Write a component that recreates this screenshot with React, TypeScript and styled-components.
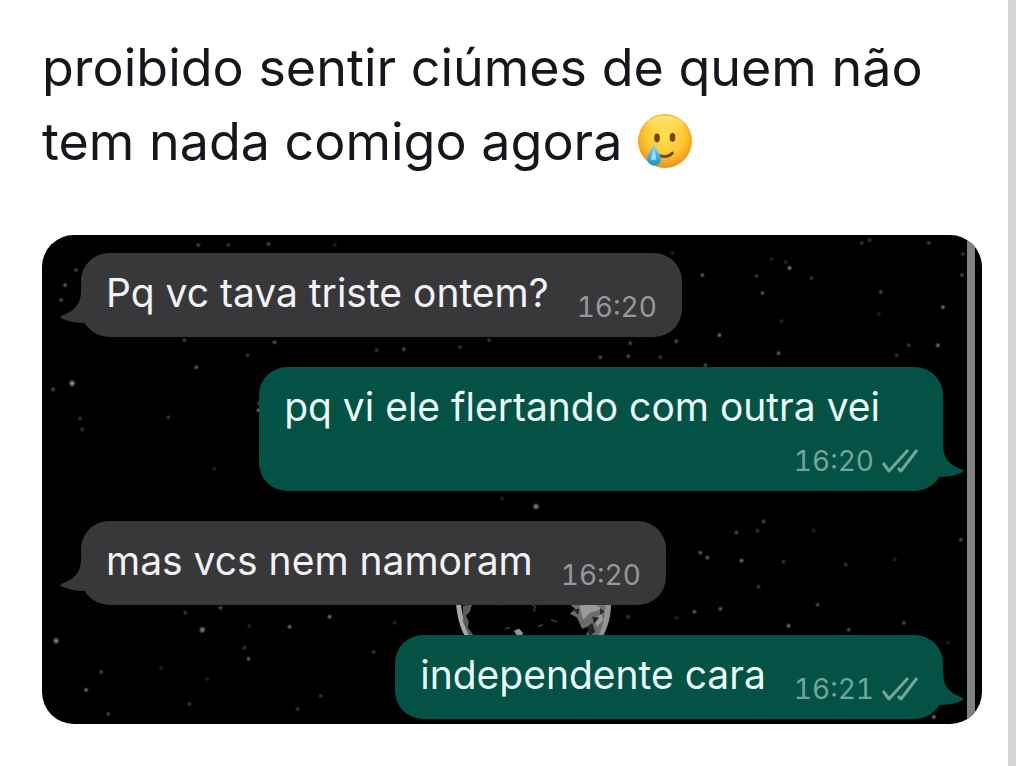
import React from "react";
import styled, { createGlobalStyle, css } from "styled-components";

const GlobalStyle = createGlobalStyle`
  *, *::before, *::after { box-sizing: border-box; }
  body {
    margin: 0;
    background: #fff;
    font-family: Inter, "Liberation Sans", sans-serif;
  }
`;

const Page = styled.div`
  display: flex;
  min-height: 100vh;
  padding-right: 8px;
  background: #fff;
`;

const Post = styled.article`
  flex: 1;
  min-width: 0;
  padding: 31px 26px 40px 42px;
`;

const Rail = styled.div`
  flex: none;
  width: 8px;
  background: #d6d6d6;
`;

const PostText = styled.p`
  margin: 0 0 56px;
  color: #14171c;
  font-size: 52px;
  font-weight: 400;
  line-height: 74px;
`;

const Emoji = styled.svg`
  width: 56px;
  height: 56px;
  vertical-align: -9px;
`;

const Chat = styled.section`
  position: relative;
  overflow: hidden;
  border-radius: 32px;
  background: #000;
`;

const Sky = styled.svg`
  position: absolute;
  inset: 0;
  width: 100%;
  height: 100%;
`;

const ScrollBar = styled.div`
  position: absolute;
  top: 0;
  bottom: 0;
  right: 7px;
  width: 8px;
  background: #808080;
`;

const Messages = styled.ul`
  position: relative;
  display: flex;
  flex-direction: column;
  gap: 30px;
  margin: 0;
  padding: 18px 39px 5px;
  list-style: none;
`;

const Words = styled.span`
  font-size: 39px;
  line-height: 48px;
`;

const Bubble = styled.li<{ $out?: boolean; $stacked?: boolean }>`
  position: relative;
  display: flex;
  justify-content: space-between;
  gap: 12px 28px;
  min-height: 84px;
  padding: 16px 25px 12px;
  border-radius: 28px;
  align-self: ${(p) => (p.$out ? "flex-end" : "flex-start")};
  background: ${(p) => (p.$out ? "#045146" : "#38373a")};
  color: ${(p) => (p.$out ? "#e9fbf6" : "#f3f2f6")};
  ${(p) =>
    p.$stacked &&
    css`
      flex-direction: column;
      ${Words} {
        padding-right: 38px;
      }
    `}
`;

const Meta = styled.span<{ $out?: boolean }>`
  display: flex;
  align-items: center;
  align-self: flex-end;
  gap: 8px;
  font-size: 28px;
  font-variant-numeric: tabular-nums;
  line-height: 36px;
  color: ${(p) => (p.$out ? "#74a49b" : "#98979b")};
`;

const TailShape = styled.svg<{ $out?: boolean }>`
  position: absolute;
  bottom: 2px;
  width: 42px;
  height: 44px;
  ${(p) =>
    p.$out
      ? css`right: -21px; fill: #045146;`
      : css`left: -21px; fill: #38373a; transform: scaleX(-1);`}
`;

const TickShape = styled.svg`
  width: 36px;
  height: 26px;
`;

function Tail({ out }: { out?: boolean }) {
  return (
    <TailShape $out={out} viewBox="0 0 42 44" aria-hidden="true">
      <path d="M21 0C21 13 27 20 41 25Q42 26 41 27Q32 32 16 32L6 38V0Z" />
    </TailShape>
  );
}

function Ticks() {
  return (
    <TickShape viewBox="0 0 36 26" role="img" aria-label="lida">
      <path
        d="M1 15L7 23L26 2M16 20L19 23L35 2"
        fill="none"
        stroke="#74a49b"
        strokeWidth="3"
        strokeLinejoin="round"
      />
    </TickShape>
  );
}

function TearFace() {
  return (
    <Emoji viewBox="0 0 56 56" role="img" aria-label="rosto sorridente com lágrima">
      <defs>
        <radialGradient id="face" cx="50%" cy="40%" r="62%">
          <stop offset="0" stopColor="#ffe154" />
          <stop offset="0.6" stopColor="#fcc62f" />
          <stop offset="0.9" stopColor="#ee9a20" />
          <stop offset="1" stopColor="#e08a1c" />
        </radialGradient>
        <linearGradient id="shine" x1="0" y1="0" x2="0" y2="1">
          <stop offset="0" stopColor="#fff6a5" stopOpacity="0.7" />
          <stop offset="1" stopColor="#ffe04a" stopOpacity="0" />
        </linearGradient>
        <linearGradient id="tear" x1="0" y1="0" x2="0" y2="1">
          <stop offset="0" stopColor="#a9def2" />
          <stop offset="0.5" stopColor="#4fb5e6" />
          <stop offset="1" stopColor="#1c8bd0" />
        </linearGradient>
      </defs>
      <circle cx="28" cy="28" r="27" fill="url(#face)" />
      <ellipse cx="28" cy="13" rx="19" ry="10" fill="url(#shine)" />
      <ellipse cx="20" cy="25" rx="2.8" ry="4.4" fill="#70430f" />
      <ellipse cx="35.5" cy="24.5" rx="2.8" ry="4.4" fill="#70430f" />
      <path d="M21 42Q30 46 35.5 40" fill="none" stroke="#70430f" strokeWidth="2.6" strokeLinecap="round" />
      <path d="M17 30C18 37 24 40 24 46A7 6.5 0 0 1 10 46C10 40 15 37 17 30Z" fill="url(#tear)" />
      <path d="M17 36C17 40 20 42 19 46A3 3 0 0 1 14 46C14 42 16 40 17 36Z" fill="#c4edfd" opacity="0.7" />
    </Emoji>
  );
}

/* x, y, radius, brightness */
const stars: [number, number, number, number][] = [
  [157, 10, 3, 0.4], [187, 10, 3, 0.3], [227, 9, 3, 0.4], [293, 10, 3, 0.2],
  [35, 35, 3, 0.35], [24, 50, 3, 0.5], [20, 65, 3, 0.4],
  [143, 105, 3, 0.35], [233, 107, 3, 0.45], [206, 120, 3, 0.3], [335, 115, 3, 0.3],
  [362, 114, 3, 0.4], [418, 112, 3, 0.3], [447, 105, 3, 0.3], [558, 122, 3, 0.4],
  [586, 121, 3, 0.4], [588, 108, 3, 0.4], [634, 106, 3, 0.4], [618, 122, 3, 0.3],
  [630, 18, 3, 0.2], [660, 40, 3, 0.5], [714, 41, 3, 0.3], [720, 58, 3, 0.45],
  [747, 33, 3, 0.65], [729, 24, 3, 0.2], [743, 27, 3, 0.2], [769, 43, 3, 0.3],
  [819, 8, 3, 0.3], [827, 5, 3, 0.3], [886, 8, 3, 0.35], [920, 19, 3, 0.3],
  [919, 40, 3, 0.4], [838, 57, 3, 0.4], [900, 72, 3, 0.6], [836, 79, 3, 0.2],
  [739, 86, 3, 0.2], [677, 100, 3, 0.6], [736, 118, 3, 0.5], [895, 110, 3, 0.6],
  [866, 110, 3, 0.3], [854, 120, 3, 0.3], [663, 130, 3, 0.4],
  [31, 148, 4, 0.8], [12, 154, 3, 0.4], [155, 132, 3, 0.5], [39, 183, 3, 0.3],
  [41, 194, 3, 0.3], [127, 182, 3, 0.3], [217, 175, 3, 0.6], [218, 168, 3, 0.5],
  [173, 233, 3, 0.2], [494, 271, 4, 0.7], [460, 263, 3, 0.2],
  [15, 405, 4, 0.7], [60, 436, 3, 0.4], [45, 454, 3, 0.6], [67, 478, 3, 0.4],
  [144, 377, 3, 0.3], [179, 372, 3, 0.4], [161, 394, 4, 0.7], [248, 391, 3, 0.6],
  [208, 390, 3, 0.2], [288, 381, 3, 0.6], [203, 412, 3, 0.3], [207, 423, 3, 0.5],
  [120, 432, 3, 0.2], [166, 443, 3, 0.2], [148, 468, 3, 0.3], [279, 460, 3, 0.3],
  [256, 473, 3, 0.3], [353, 387, 3, 0.2], [332, 416, 3, 0.3],
  [721, 286, 3, 0.4], [694, 297, 3, 0.4], [715, 295, 3, 0.3], [771, 295, 3, 0.2],
  [658, 317, 3, 0.5], [665, 322, 3, 0.5], [699, 325, 3, 0.6], [741, 326, 3, 0.3],
  [803, 329, 3, 0.3], [852, 324, 3, 0.2], [918, 304, 3, 0.4], [716, 351, 3, 0.3],
  [775, 369, 3, 0.4], [678, 373, 3, 0.5], [652, 376, 3, 0.5], [746, 390, 3, 0.6],
  [806, 394, 3, 0.4], [861, 387, 3, 0.4], [905, 407, 3, 0.2], [891, 481, 3, 0.6],
  [586, 381, 3, 0.3], [634, 382, 3, 0.2],
];

function NightSky() {
  return (
    <Sky viewBox="0 0 940 488" preserveAspectRatio="xMidYMid slice" aria-hidden="true">
      <defs>
        <radialGradient id="star">
          <stop offset="0" stopColor="#c9c9c9" />
          <stop offset="0.4" stopColor="#a5a5a5" stopOpacity="0.8" />
          <stop offset="1" stopColor="#808080" stopOpacity="0" />
        </radialGradient>
      </defs>
      {stars.map(([x, y, r, o]) => (
        <circle key={`${x}-${y}`} cx={x} cy={y} r={r} opacity={o} fill="url(#star)" />
      ))}
      <path d="M414 366C415 380 418 392 424 402L429 400C423 390 420 380 419 366Z" fill="#a8a8a8" />
      <path d="M421 370L430 369L428 376L424 380L427 386L426 392L432 400H427L421 386Z" fill="#5c5c5c" />
      <path d="M527 368H566C565 382 561 394 555 402H543L548 390L540 393L535 382L528 378L533 373Z" fill="#6c6c6c" />
      <path d="M563 366C563 381 561 392 555 402H560C566 391 569 380 569 366Z" fill="#929292" />
      <path d="M537 370L552 368L560 373L548 377L541 384ZM552 384L559 378L561 384L555 391Z" fill="#9a9a9a" />
      <path d="M550 381L557 382L552 388ZM545 391L550 387L553 396L547 401ZM558 372L562 376L558 379ZM531 374L537 373L536 379Z" fill="#242424" />
      <path d="M490 369L493 371L492 376M456 369L460 367M463 393L468 392M509 384L515 386M496 391L501 389" stroke="#303030" strokeWidth="2" fill="none" />
      <path d="M472 395L477 393L481 397L480 400H475Z" fill="#959595" />
    </Sky>
  );
}

type Message = { text: string; time: string; out?: boolean; stacked?: boolean };

const messages: Message[] = [
  { text: "Pq vc tava triste ontem?", time: "16:20" },
  { text: "pq vi ele flertando com outra vei", time: "16:20", out: true, stacked: true },
  { text: "mas vcs nem namoram", time: "16:20" },
  { text: "independente cara", time: "16:21", out: true },
];

export default function App() {
  return (
    <>
      <GlobalStyle />
      <Page>
        <Post>
          <PostText>
            proibido sentir ciúmes de quem não tem nada comigo agora <TearFace />
          </PostText>
          <Chat>
            <NightSky />
            <ScrollBar />
            <Messages>
              {messages.map((m) => (
                <Bubble key={m.text} $out={m.out} $stacked={m.stacked}>
                  <Tail out={m.out} />
                  <Words>{m.text}</Words>
                  <Meta $out={m.out}>
                    <time>{m.time}</time>
                    {m.out && <Ticks />}
                  </Meta>
                </Bubble>
              ))}
            </Messages>
          </Chat>
        </Post>
        <Rail />
      </Page>
    </>
  );
}
